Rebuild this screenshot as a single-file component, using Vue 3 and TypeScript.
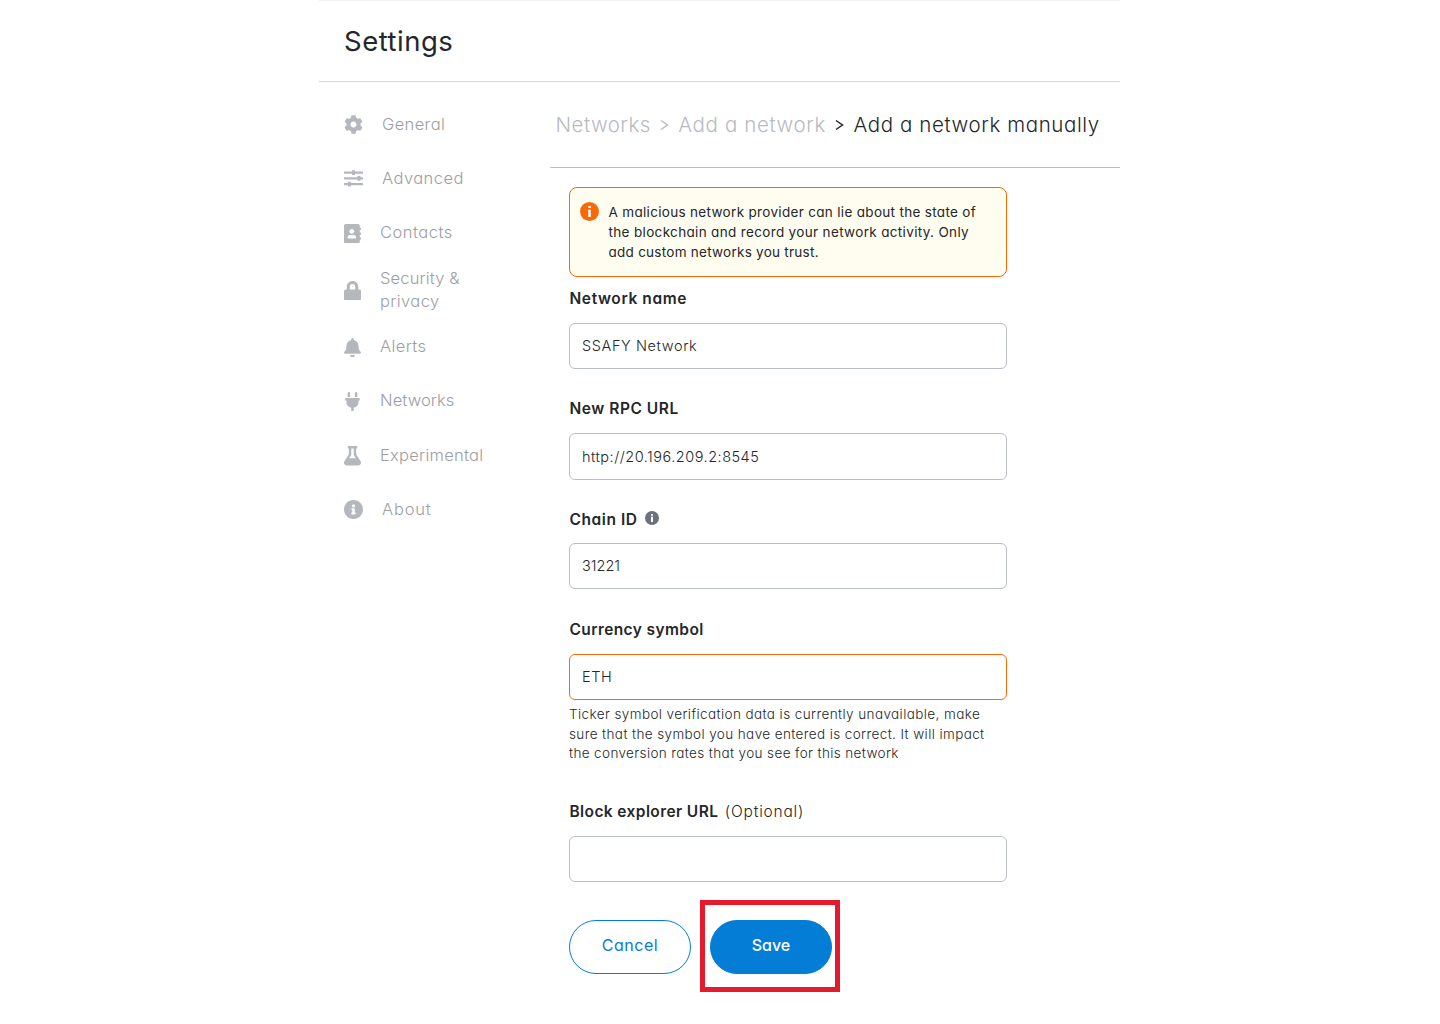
<script setup lang="ts">
interface NavLine {
  text: string
  spacing: number
}

interface NavItem {
  lines: NavLine[]
  wide?: boolean
  viewBox: string
  path: string
  row: number
}

const infoPath =
  'M256 8C119.043 8 8 119.083 8 256c0 136.997 111.043 248 248 248s248-111.003 248-248C504 119.083 392.957 8 256 8zm0 110c23.196 0 42 18.804 42 42s-18.804 42-42 42-42-18.804-42-42 18.804-42 42-42zm56 254c0 6.627-5.373 12-12 12h-88c-6.627 0-12-5.373-12-12v-24c0-6.627 5.373-12 12-12h12v-64h-12c-6.627 0-12-5.373-12-12v-24c0-6.627 5.373-12 12-12h64c6.627 0 12 5.373 12 12v100h12c6.627 0 12 5.373 12 12v24z'

const navItems: NavItem[] = [
  {
    lines: [{ text: 'General', spacing: 0.38 }], wide: true, viewBox: '0 0 512 512', row: 54,
    path: 'M487.4 315.7l-42.6-24.6c4.3-23.2 4.3-47 0-70.2l42.6-24.6c4.9-2.8 7.1-8.6 5.5-14-11.1-35.6-30-67.8-54.7-94.6-3.8-4.1-10-5.1-14.8-2.3L380.8 110c-17.9-15.4-38.5-27.3-60.8-35.1V25.8c0-5.6-3.9-10.5-9.4-11.7-36.7-8.2-74.3-7.8-109.2 0-5.5 1.2-9.4 6.1-9.4 11.7V75c-22.2 7.9-42.8 19.8-60.8 35.1L88.7 85.5c-4.9-2.8-11-1.9-14.8 2.3-24.7 26.7-43.6 58.9-54.7 94.6-1.7 5.4.6 11.2 5.5 14L67.3 221c-4.3 23.2-4.3 47 0 70.2l-42.6 24.6c-4.9 2.8-7.1 8.6-5.5 14 11.1 35.6 30 67.8 54.7 94.6 3.8 4.1 10 5.1 14.8 2.3l42.6-24.6c17.9 15.4 38.5 27.3 60.8 35.1v49.2c0 5.6 3.9 10.5 9.4 11.7 36.7 8.2 74.3 7.8 109.2 0 5.5-1.2 9.4-6.1 9.4-11.7v-49.2c22.2-7.9 42.8-19.8 60.8-35.1l42.6 24.6c4.9 2.8 11 1.9 14.8-2.3 24.7-26.7 43.6-58.9 54.7-94.6 1.5-5.5-.7-11.3-5.6-14.1zM256 336c-44.1 0-80-35.9-80-80s35.9-80 80-80 80 35.9 80 80-35.9 80-80 80z',
  },
  {
    lines: [{ text: 'Advanced', spacing: 0.45 }], wide: true, viewBox: '0 0 19 19', row: 54,
    path: 'M.5 2.500H8V1.200h3v1.300h7.500q.5 0 .5.500v1.200q0 .5-.5.500H11V6H8V4.700H.5Q0 4.700 0 4.200V3q0-.5.5-.5zM.5 8.200H13.500V7h3v1.200h2q.5 0 .5.500v1.200q0 .5-.5.500h-2v1.300h-3v-1.300H.5q-.5 0-.5-.5V8.700q0-.5.5-.5zM.5 14H4v-1.300h3V14h11.500q.5 0 .5.500v1.200q0 .5-.5.500H7v1.300H4v-1.300H.5q-.5 0-.5-.5v-1.200q0-.5.5-.5z',
  },
  {
    lines: [{ text: 'Contacts', spacing: 0.5 }], viewBox: '0 0 448 512', row: 54,
    path: 'M436 160c6.600 0 12-5.400 12-12v-40c0-6.600-5.400-12-12-12h-20V48c0-26.500-21.500-48-48-48H48C21.500 0 0 21.500 0 48v416c0 26.500 21.500 48 48 48h320c26.500 0 48-21.500 48-48v-48h20c6.600 0 12-5.400 12-12v-40c0-6.600-5.400-12-12-12h-20v-64h20c6.600 0 12-5.400 12-12v-40c0-6.600-5.400-12-12-12h-20v-64h20zm-228-32c35.300 0 64 28.700 64 64s-28.700 64-64 64-64-28.700-64-64 28.700-64 64-64zm112 236.800c0 10.600-10 19.200-22.400 19.200H118.400C106 384 96 375.400 96 364.800v-19.200c0-31.800 30.100-57.600 67.200-57.600h5c12.300 5.100 25.700 8 39.800 8s27.600-2.900 39.800-8h5c37.100 0 67.200 25.800 67.200 57.600v19.200z',
  },
  {
    lines: [{ text: 'Security &', spacing: 0.15 }, { text: 'privacy', spacing: 0.4 }], viewBox: '0 0 448 512', row: 60,
    path: 'M400 224h-24v-72C376 68.200 307.800 0 224 0S72 68.200 72 152v72H48c-26.500 0-48 21.500-48 48v192c0 26.500 21.500 48 48 48h352c26.500 0 48-21.500 48-48V272c0-26.500-21.500-48-48-48zm-104 0H152v-72c0-39.700 32.300-72 72-72s72 32.300 72 72v72z',
  },
  {
    lines: [{ text: 'Alerts', spacing: 0.4 }], viewBox: '0 0 448 512', row: 54,
    path: 'M224 512c35.320 0 63.970-28.650 63.970-64H160.030c0 35.350 28.650 64 63.970 64zm215.390-149.710c-19.320-20.760-55.470-51.990-55.470-154.290 0-77.700-54.480-139.900-127.940-155.160V32c0-17.670-14.320-32-31.980-32s-31.980 14.330-31.980 32v20.840C118.560 68.100 64.080 130.300 64.080 208c0 102.300-36.150 133.530-55.470 154.290-6 6.450-8.660 14.160-8.610 21.710.11 16.400 12.980 32 32.100 32h383.800c19.120 0 32-15.600 32.100-32 .05-7.550-2.610-15.270-8.610-21.710z',
  },
  {
    lines: [{ text: 'Networks', spacing: 0.1 }], viewBox: '-32 0 448 512', row: 54,
    path: 'M320,32a32,32,0,0,0-64,0v96h64Zm48,128H16A16,16,0,0,0,0,176v32a16,16,0,0,0,16,16H32v32A160.070,160.070,0,0,0,160,412.800V512h64V412.800A160.070,160.070,0,0,0,352,256V224h16a16,16,0,0,0,16-16V176A16,16,0,0,0,368,160ZM128,32a32,32,0,0,0-64,0v96h64Z',
  },
  {
    lines: [{ text: 'Experimental', spacing: 0.25 }], viewBox: '0 0 448 512', row: 55,
    path: 'M437.200 403.500L320 215V64h8c13.300 0 24-10.700 24-24V24c0-13.300-10.700-24-24-24H120c-13.300 0-24 10.700-24 24v16c0 13.300 10.700 24 24 24h8v151L10.800 403.500C-18.500 450.600 15.300 512 70.900 512h306.200c55.700 0 89.400-61.500 60.100-108.500zM137.900 320l48.200-77.600c3.700-5.200 5.800-11.600 5.800-18.400V64h64v160c0 6.900 2.200 13.200 5.800 18.400l48.200 77.600h-172z',
  },
  { lines: [{ text: 'About', spacing: 0.8 }], wide: true, viewBox: '8 8 496 496', row: 54, path: infoPath },
]
</script>

<template>
  <div class="settings">
    <header class="header"><h1>Settings</h1></header>
    <div class="body">
      <nav class="nav">
        <a
          v-for="item in navItems"
          :key="item.lines[0].text"
          class="nav-item"
          :class="{ wide: item.wide }"
          :style="{ height: item.row + 'px' }"
        >
          <svg :viewBox="item.viewBox"><path :d="item.path" fill="currentColor" /></svg>
          <span class="nav-label">
            <span
              v-for="line in item.lines"
              :key="line.text"
              class="line"
              :style="{ letterSpacing: line.spacing + 'px' }"
            >{{ line.text }}</span>
          </span>
        </a>
      </nav>
      <main class="main">
        <div class="crumbs">
          <span class="c1">Networks</span>
          <svg width="9" height="12" viewBox="0 0 9 12"><path d="M1 1.500L7.500 6L1 10.500" /></svg>
          <span class="c2">Add a network</span>
          <svg class="dark" width="9" height="12" viewBox="0 0 9 12"><path d="M1 1.500L7.500 6L1 10.500" /></svg>
          <span class="c3 dark">Add a network manually</span>
        </div>
        <form class="form" @submit.prevent>
          <div class="alert">
            <svg width="19" height="19" viewBox="0 0 19 19">
              <circle cx="9.500" cy="9.500" r="9.500" fill="#f66a0a" />
              <path d="M8.200 3.900h2.600v2.200H8.200zM8.200 7.700h2.600v7.400H8.200z" fill="#fffcf0" />
            </svg>
            <p>
              <span class="line a1">A malicious network provider can lie about the state of</span>
              <span class="line a2">the blockchain and record your network activity. Only</span>
              <span class="line a3">add custom networks you trust.</span>
            </p>
          </div>
          <div class="field f1">
            <label class="l1">Network name</label>
            <div class="input"><span class="v1">SSAFY Network</span></div>
          </div>
          <div class="field f2">
            <label class="l2">New RPC URL</label>
            <div class="input"><span class="v2">http://20.196.209.2:8545</span></div>
          </div>
          <div class="field f3">
            <label class="l3">Chain ID
              <svg width="14" height="14" viewBox="0 0 14 14">
                <circle cx="7" cy="7" r="7" fill="#6a737d" />
                <path d="M6 3h2v1.700H6zM6 5.800h2V11H6z" fill="#fff" />
              </svg>
            </label>
            <div class="input"><span class="v3">31221</span></div>
          </div>
          <div class="field f4">
            <label class="l4">Currency symbol</label>
            <div class="input warn"><span class="v4">ETH</span></div>
            <p class="help">
              <span class="line h1">Ticker symbol verification data is currently unavailable, make</span>
              <span class="line h2">sure that the symbol you have entered is correct. It will impact</span>
              <span class="line h3">the conversion rates that you see for this network</span>
            </p>
          </div>
          <div class="field f5">
            <label class="l5">Block explorer URL <span class="optional">(Optional)</span></label>
            <div class="input"></div>
          </div>
          <div class="actions">
            <button class="btn cancel" type="button"><span>Cancel</span></button>
            <div class="save-wrap">
              <button class="btn save" type="submit"><span>Save</span></button>
              <div class="highlight"></div>
            </div>
          </div>
        </form>
      </main>
    </div>
  </div>
</template>

<style>
body { background: #fff; }
</style>

<style scoped>
* { box-sizing: border-box; }
.settings {
  width: 801px;
  height: 1024px;
  margin-left: 319px;
  font-family: Inter, "Open Sans", sans-serif;
  font-feature-settings: "cv11";
  color: #24272a;
  background: #fff;
  overflow: hidden;
}
.header {
  height: 82px;
  border-top: 1px solid #f0f1f4;
  border-bottom: 1px solid #d3d6da;
  padding-left: 25px;
}
h1 { margin: 0; font-size: 27.500px; line-height: 81px; font-weight: 370; letter-spacing: 0.500px; }
.body { display: flex; }
.nav { width: 231px; flex: none; padding: 16px 0 0 25px; }
.nav-item { display: flex; align-items: center; gap: 19px; color: #b4b8bd; }
.nav-item svg { flex: none; width: 17px; height: 19.500px; margin-top: 1px; }
.nav-item.wide svg { width: 19px; height: 19px; margin-top: -1px; }
.nav-label { font-size: 16.500px; line-height: 23.500px; font-weight: 300; color: #9c9ea2; }
.line { display: block; white-space: nowrap; }
.main { width: 570px; flex: none; }
.crumbs {
  height: 86px;
  display: flex;
  align-items: center;
  padding-left: 5.500px;
  border-bottom: 1px solid #bbc0c5;
  font-size: 20.500px;
  font-weight: 320;
  color: #b7bbc0;
  white-space: nowrap;
}
.crumbs svg { margin: 1px 9.500px 0 9px; flex: none; fill: none; stroke: #b7bbc0; stroke-width: 1.500; }
.crumbs .dark { color: #24272a; }
.crumbs svg.dark { stroke: #24272a; }
.c1 { letter-spacing: 0.480px; }
.c2 { letter-spacing: 0.620px; }
.c3 { letter-spacing: 0.600px; }
.form { padding: 19px 0 0 19px; width: 457px; }
.alert {
  height: 90px;
  border: 1px solid #f66a0a;
  border-radius: 8px;
  background: #fffcf0;
  display: flex;
  padding: 14px 0 0 10px;
}
.alert svg { flex: none; }
.alert p { margin: 0 0 0 9.500px; font-size: 13.500px; line-height: 20.200px; font-weight: 380; }
.a1 { letter-spacing: 0.320px; }
.a2 { letter-spacing: 0.340px; }
.a3 { letter-spacing: 0.260px; }
.field label { display: flex; align-items: center; height: 24px; padding: 2px 0 0 0.500px; font-size: 15.500px; font-weight: 600; white-space: nowrap; }
.field label svg { margin: -2px 0 0 7.500px; }
.field .l2 { padding-top: 0; }
.l1 { letter-spacing: 0.600px; }
.l2 { letter-spacing: 0.540px; }
.l3 { letter-spacing: 0.560px; }
.l4 { letter-spacing: 0.400px; }
.l5 { letter-spacing: 0.400px; }
.input {
  height: 46px;
  border: 1px solid #bbc0c5;
  border-radius: 6px;
  padding: 0 0 2px 12px;
  display: flex;
  align-items: center;
  font-size: 14.500px;
  font-weight: 350;
  margin-top: 13px;
}
.input.warn { border-color: #f66a0a; }
.v1 { letter-spacing: 0.600px; }
.v2 { letter-spacing: 0.500px; }
.v4 { letter-spacing: 0.600px; }
.f1 { padding-top: 8px; }
.f1 .input, .f4 .input, .f5 .input { margin-top: 14px; }
.f2 { padding-top: 27px; }
.f2 .input { height: 47px; padding-bottom: 1px; }
.f3 { padding-top: 26px; }
.f4 { padding-top: 27px; }
.help { margin: 5px 0 0; font-size: 13.500px; line-height: 19.700px; height: 60px; font-weight: 350; }
.h1 { letter-spacing: 0.405px; }
.h2 { letter-spacing: 0.390px; }
.h3 { letter-spacing: 0.375px; }
.f5 { padding-top: 33px; }
.optional { font-weight: 350; margin-left: 6.500px; letter-spacing: 0.800px; }
.actions { display: flex; gap: 19px; margin-top: 38px; }
.btn {
  width: 122px;
  height: 54px;
  display: block;
  border: 1px solid #037dd6;
  border-radius: 27px;
  padding: 0 0 4px;
  font-family: inherit;
  font-feature-settings: inherit;
  font-size: 16px;
  color: #037dd6;
  background: #fff;
}
.cancel { letter-spacing: 0.500px; }
.save { background: #037dd6; color: #fff; font-weight: 500; }
.save-wrap { position: relative; }
.highlight { position: absolute; left: -10px; top: -20px; width: 140px; height: 92px; border: 5px solid #e31b2d; }
</style>
